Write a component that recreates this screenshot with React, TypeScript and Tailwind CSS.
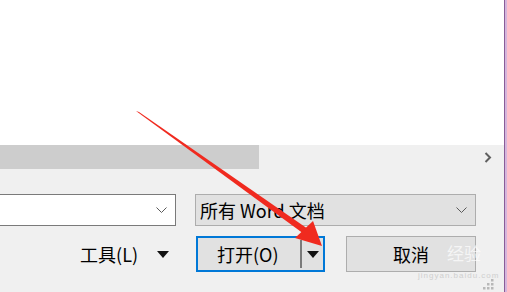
import React from "react"

const cjk = { fontFamily: '"Noto Sans CJK SC", "Liberation Sans", sans-serif' }

function ChevronDown() {
    return (
        <svg width="11" height="7" viewBox="0 0 11 7" className="shrink-0">
            <path d="M0.5 0.5 L5.5 5.5 L10.5 0.5" fill="none" stroke="#5a5a5a" strokeWidth="1" />
        </svg>
    )
}

function Tri() {
    return (
        <svg width="12" height="7" viewBox="0 0 12 7">
            <path d="M0 0 H12 L6 7 Z" fill="#111" />
        </svg>
    )
}

function SizeGrip() {
    const dots = [[12, 0], [8, 4], [12, 4], [4, 8], [8, 8], [12, 8]]
    return (
        <svg width="15" height="12" viewBox="0 0 15 12" className="absolute right-[10px] bottom-[1px]">
            {dots.map(([x, y]) => (
                <rect key={`${x}-${y}`} x={x} y={y} width="2.5" height="2.5" fill="#b8b8b8" />
            ))}
        </svg>
    )
}

function Arrow() {
    return (
        <svg width="507" height="292" viewBox="0 0 507 292" className="absolute left-0 top-0 pointer-events-none">
            <path d="M136 111 L139 112 L308 229 L304 234 Z" fill="#f02a1f" />
            <path d="M295 238 L313 221 L322 246 Z" fill="#f02a1f" />
        </svg>
    )
}

export default function App() {
    return (
        <div className="relative w-[507px] h-[292px] overflow-hidden flex bg-white select-none" style={cjk}>
            <div className="flex-1 flex flex-col">
                {/* file list area */}
                <div className="h-[145px] bg-white" />

                {/* horizontal scrollbar */}
                <div className="h-[24px] bg-[#f0f0f0] flex items-center">
                    <div className="w-[259px] h-full bg-[#cdcdcd]" />
                    <div className="flex-1" />
                    <svg width="8" height="11" viewBox="0 0 8 11" className="mr-[12px]">
                        <path d="M1.5 1 L6 5.5 L1.5 10" fill="none" stroke="#606060" strokeWidth="2" />
                    </svg>
                </div>

                {/* bottom panel */}
                <div className="relative flex-1 bg-[#f0f0f0] flex flex-col pt-[25px] pr-[28px] gap-[10px]">
                    <div className="flex items-center h-[32px] gap-[19px]">
                        <div className="-ml-[10px] w-[186px] h-full bg-white border border-[#7a7a7a] flex items-center justify-end pr-[8px]">
                            <ChevronDown />
                        </div>
                        <div className="flex-1 h-full bg-[#e1e1e1] border border-[#adadad] flex items-center pl-[4px] pr-[8px] text-[18px] leading-none text-black">
                            <span className="flex-1">所有 Word 文档</span>
                            <ChevronDown />
                        </div>
                    </div>

                    <div className="flex items-center h-[36px] justify-end">
                        <span className="text-[18px] leading-none text-black">工具(L)</span>
                        <span className="ml-[19px] mr-[27px] mt-[1px]"><Tri /></span>
                        <div className="w-[129px] h-full border-2 border-[#0078d7] bg-[#e1e1e1] flex items-stretch">
                            <div className="flex-1 flex items-center pl-[19px] text-[18px] leading-none text-black">打开(O)</div>
                            <div className="w-[2px] my-[2px] bg-[#7a7a7a]" />
                            <div className="w-[21px] flex items-center justify-center"><Tri /></div>
                        </div>
                        <div className="ml-[21px] w-[130px] h-full border border-[#adadad] bg-[#e1e1e1] flex items-center pl-[46px] text-[18px] leading-none text-black relative">
                            取消
                            <span className="absolute left-[100px] top-[7px] text-[17px] leading-none text-white/70 whitespace-nowrap">经验</span>
                        </div>
                    </div>
                    <span className="absolute left-[418px] bottom-[12px] text-[8px] leading-none text-[#cfcfcf] tracking-[1px]" style={{ fontFamily: '"Liberation Sans", sans-serif' }}>jingyan.baidu.com</span>
                    <SizeGrip />
                </div>
            </div>

            {/* neighbouring window edge */}
            <div className="w-[3px] h-full bg-[#d4b6dc] border-l border-[#8a5c98]" />

            <Arrow />
        </div>
    )
}
